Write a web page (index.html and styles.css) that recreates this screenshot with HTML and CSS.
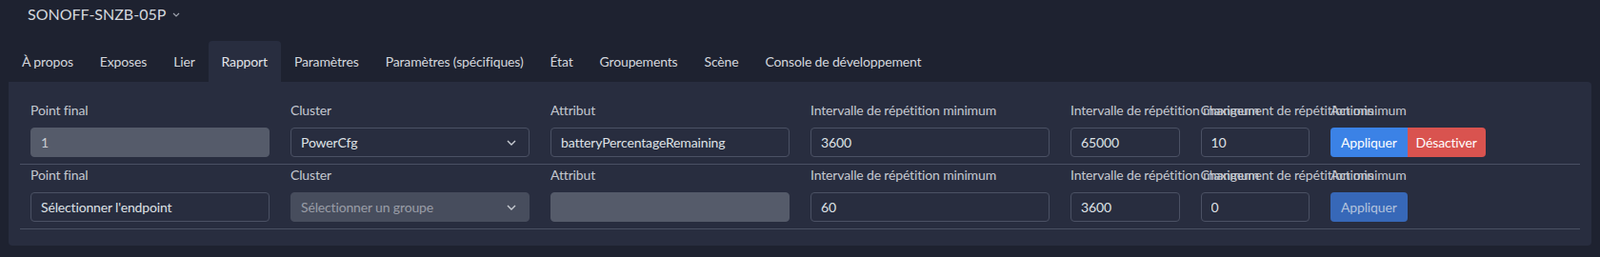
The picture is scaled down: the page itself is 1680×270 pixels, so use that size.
FILE: index.html
```html
<!DOCTYPE html>
<html lang="fr">
<head>
<meta charset="utf-8">
<title>SONOFF-SNZB-05P</title>
<link rel="stylesheet" href="styles.css">
</head>
<body>
<header class="device-header">
  <span class="device-name">SONOFF-SNZB-05P</span>
  <svg class="device-caret" width="8" height="5" viewBox="0 0 8 5"><path d="M1 1l3 3 3-3" fill="none" stroke="currentColor" stroke-width="1.2"/></svg>
</header>

<nav class="tabs">
  <a class="tab">À propos</a>
  <a class="tab">Exposes</a>
  <a class="tab">Lier</a>
  <a class="tab active">Rapport</a>
  <a class="tab">Paramètres</a>
  <a class="tab">Paramètres (spécifiques)</a>
  <a class="tab">État</a>
  <a class="tab">Groupements</a>
  <a class="tab">Scène</a>
  <a class="tab">Console de développement</a>
</nav>

<section class="card">
  <div class="report-row">
    <div class="field">
      <label class="field-label">Point final</label>
      <input class="control" type="text" value="1" disabled>
    </div>
    <div class="field">
      <label class="field-label">Cluster</label>
      <div class="select-wrap">
        <select class="control select"><option>PowerCfg</option></select>
        <svg class="select-caret" width="10" height="6" viewBox="0 0 10 6"><path d="M1 1l4 4 4-4" fill="none" stroke="currentColor" stroke-width="1.4"/></svg>
      </div>
    </div>
    <div class="field">
      <label class="field-label">Attribut</label>
      <input class="control" type="text" value="batteryPercentageRemaining">
    </div>
    <div class="field">
      <label class="field-label">Intervalle de répétition minimum</label>
      <input class="control" type="text" value="3600">
    </div>
    <div class="field">
      <label class="field-label">Intervalle de répétition maximum</label>
      <input class="control" type="text" value="65000">
    </div>
    <div class="field">
      <label class="field-label">Changement de répétition minimum</label>
      <input class="control" type="text" value="10">
    </div>
    <div class="field">
      <label class="field-label">Actions</label>
      <div class="btn-group">
        <button class="btn btn-primary">Appliquer</button>
        <button class="btn btn-danger">Désactiver</button>
      </div>
    </div>
  </div>

  <div class="report-row">
    <div class="field">
      <label class="field-label">Point final</label>
      <input class="control" type="text" value="Sélectionner l'endpoint">
    </div>
    <div class="field">
      <label class="field-label">Cluster</label>
      <div class="select-wrap">
        <select class="control select" disabled><option>Sélectionner un groupe</option></select>
        <svg class="select-caret" width="10" height="6" viewBox="0 0 10 6"><path d="M1 1l4 4 4-4" fill="none" stroke="currentColor" stroke-width="1.4"/></svg>
      </div>
    </div>
    <div class="field">
      <label class="field-label">Attribut</label>
      <input class="control" type="text" value="" disabled>
    </div>
    <div class="field">
      <label class="field-label">Intervalle de répétition minimum</label>
      <input class="control" type="text" value="60">
    </div>
    <div class="field">
      <label class="field-label">Intervalle de répétition maximum</label>
      <input class="control" type="text" value="3600">
    </div>
    <div class="field">
      <label class="field-label">Changement de répétition minimum</label>
      <input class="control" type="text" value="0">
    </div>
    <div class="field">
      <label class="field-label">Actions</label>
      <div class="btn-group">
        <button class="btn btn-primary btn-disabled" disabled>Appliquer</button>
      </div>
    </div>
  </div>
</section>
</body>
</html>
```
FILE: styles.css
```css
* { box-sizing: border-box; }

body {
  margin: 0;
  background: #1e2230;
  color: #dadde3;
  font-family: "Lato", "Liberation Sans", sans-serif;
  font-size: 14px;
  letter-spacing: -0.15px;
}

.device-header {
  display: flex;
  align-items: center;
  height: 30px;
  padding-left: 29px;
  margin-bottom: 13px;
}

.device-name {
  font-size: 16px;
  letter-spacing: 0;
  line-height: 30px;
  color: #d5d8de;
}

.device-caret {
  margin-left: 7px;
  margin-top: 1px;
  color: #9ea3ad;
}

.tabs {
  display: flex;
  padding-left: 9px;
}

.tab {
  padding: 11px 14px;
  line-height: 21px;
  letter-spacing: -0.15px;
  color: #d4d7dd;
  border-radius: 4px 4px 0 0;
}

.tab.active {
  background: #282d3f;
  color: #e2e4e8;
}

.card {
  margin: 0 9px;
  background: #282d3f;
  border-radius: 0 4px 4px 4px;
  padding: 19px 12px 17px;
}

.report-row {
  display: grid;
  grid-template-columns: 2fr 2fr 2fr 2fr 1fr 1fr 2fr;
  padding-bottom: 7px;
  border-bottom: 1px solid #4a5063;
}

.field {
  padding: 0 11px;
  min-width: 0;
}

.field-label {
  display: block;
  line-height: 21px;
  margin-bottom: 8px;
  white-space: nowrap;
  color: #c4c8d0;
}

.control {
  display: block;
  width: 100%;
  height: 31px;
  padding: 0 10px;
  border: 1px solid #4b5164;
  border-radius: 4px;
  background: #282d3f;
  color: #dfe2e6;
  font: inherit;
  letter-spacing: inherit;
  outline: none;
}

.control:disabled {
  background: #555b6a;
  border-color: #555b6a;
  color: #c9ccd3;
}

.select-wrap {
  position: relative;
}

.select {
  appearance: none;
  -webkit-appearance: none;
  padding-right: 30px;
}

.select-caret {
  position: absolute;
  right: 14px;
  top: 13px;
  color: #c8ccd3;
  pointer-events: none;
}

.btn-group {
  display: flex;
}

.btn {
  height: 31px;
  padding: 0 11px;
  border: 0;
  font: inherit;
  letter-spacing: inherit;
  color: #ffffff;
  border-radius: 0;
}

.btn-group .btn:first-child { border-radius: 4px 0 0 4px; }
.btn-group .btn:last-child { border-radius: 0 4px 4px 0; }
.btn-group .btn:only-child { border-radius: 4px; }

.btn-primary { background: #3b82e6; }
.btn-danger { background: #d9534f; padding: 0 9px; }

.btn-disabled {
  background: #3768b8;
  color: #b3c3dd;
}
```
